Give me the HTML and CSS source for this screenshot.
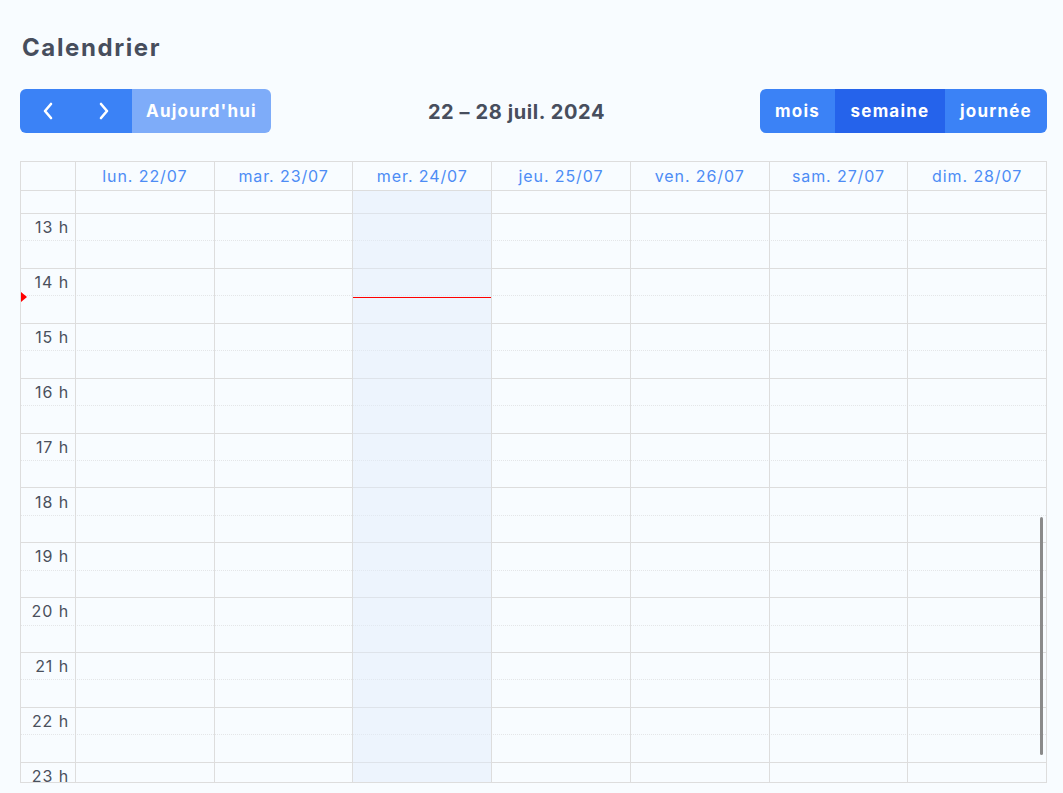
FILE: index.html
```html
<!DOCTYPE html>
<html lang="fr">
<head>
    <meta charset="UTF-8">
    <meta name="viewport" content="width=device-width, initial-scale=1.0">
    <title>Calendrier</title>
    <link rel="stylesheet" href="styles.css">
</head>
<body>
    <div class="page">
        <h1>Calendrier</h1>

        <div class="toolbar">
            <div class="btn-group">
                <button class="btn btn-icon" aria-label="précédent">
                    <svg width="12" height="18" viewBox="0 0 12 18"><polyline points="9,2 3,9 9,16" fill="none" stroke="#fff" stroke-width="2.6" stroke-linecap="round" stroke-linejoin="round"/></svg>
                </button>
                <button class="btn btn-icon" aria-label="suivant">
                    <svg width="12" height="18" viewBox="0 0 12 18"><polyline points="3,2 9,9 3,16" fill="none" stroke="#fff" stroke-width="2.6" stroke-linecap="round" stroke-linejoin="round"/></svg>
                </button>
                <button class="btn btn-disabled">Aujourd'hui</button>
            </div>

            <h2 class="toolbar-title">22 – 28 juil. 2024</h2>

            <div class="btn-group">
                <button class="btn btn-view">mois</button>
                <button class="btn btn-view active">semaine</button>
                <button class="btn btn-view">journée</button>
            </div>
        </div>

        <div class="calendar">
            <div class="col-header">
                <div class="axis-head"></div>
                <div class="day-head">lun. 22/07</div>
                <div class="day-head">mar. 23/07</div>
                <div class="day-head">mer. 24/07</div>
                <div class="day-head">jeu. 25/07</div>
                <div class="day-head">ven. 26/07</div>
                <div class="day-head">sam. 27/07</div>
                <div class="day-head">dim. 28/07</div>
            </div>

            <div class="scroller">
                <div class="slat partial"></div>
                <div class="slat hour"><span class="label">13 h</span></div>
                <div class="slat half"></div>
                <div class="slat hour"><span class="label">14 h</span></div>
                <div class="slat half"></div>
                <div class="slat hour"><span class="label">15 h</span></div>
                <div class="slat half"></div>
                <div class="slat hour"><span class="label">16 h</span></div>
                <div class="slat half"></div>
                <div class="slat hour"><span class="label">17 h</span></div>
                <div class="slat half"></div>
                <div class="slat hour"><span class="label">18 h</span></div>
                <div class="slat half"></div>
                <div class="slat hour"><span class="label">19 h</span></div>
                <div class="slat half"></div>
                <div class="slat hour"><span class="label">20 h</span></div>
                <div class="slat half"></div>
                <div class="slat hour"><span class="label">21 h</span></div>
                <div class="slat half"></div>
                <div class="slat hour"><span class="label">22 h</span></div>
                <div class="slat half"></div>
                <div class="slat hour"><span class="label">23 h</span></div>
                <div class="slat half"></div>

                <!-- columns sit over the slats, like the real calendar -->
                <div class="cols">
                    <div class="col-axis"></div>
                    <div class="col"></div>
                    <div class="col"></div>
                    <div class="col today"><div class="now-line"></div></div>
                    <div class="col"></div>
                    <div class="col"></div>
                    <div class="col"></div>
                    <div class="col"></div>
                </div>
                <div class="now-arrow"></div>
                <div class="scroll-thumb"></div>
            </div>
        </div>
    </div>
</body>
</html>
```

FILE: styles.css
```css
body {
    margin: 0;
    background: #f8fcff;
    font-family: 'Inter', 'Open Sans', sans-serif;
    color: #4a505c;
}

.page {
    padding: 0 16px 0 20px;
}

h1 {
    margin: 0;
    padding: 32px 0 0 2px;
    font-size: 24px;
    font-weight: 700;
    line-height: 32px;
    letter-spacing: 1.6px;
    color: #474e5d;
}

.toolbar {
    display: flex;
    justify-content: space-between;
    align-items: center;
    margin-top: 25px;
    margin-bottom: 28px;
}

.toolbar-title {
    margin: 0;
    font-size: 20px;
    font-weight: 700;
    letter-spacing: 0.6px;
    color: #474e5d;
    padding: 2px 0 0 2px;
}

.btn-group {
    display: flex;
    border-radius: 6px;
    overflow: hidden;
}

.btn {
    height: 44px;
    border: none;
    margin: 0;
    background: #3b82f6;
    color: #fff;
    font-family: inherit;
    font-size: 17px;
    font-weight: 700;
    letter-spacing: 1.2px;
    padding: 0;
    cursor: pointer;
}

.btn-icon {
    width: 56px;
    display: flex;
    align-items: center;
    justify-content: center;
}

.btn-disabled {
    background: #7eacf9;
    width: 139px;
    cursor: default;
}

.btn-view:nth-child(1) { width: 75px; }
.btn-view:nth-child(2) { width: 110px; }
.btn-view:nth-child(3) { width: 102px; }

.btn-view.active {
    background: #2563eb;
}

.calendar {
    border: 1px solid #dddddd;
}

.col-header {
    display: grid;
    grid-template-columns: 54px repeat(7, 1fr);
    height: 28px;
    border-bottom: 1px solid #dddddd;
}

.day-head {
    border-left: 1px solid #dddddd;
    display: flex;
    align-items: center;
    justify-content: center;
    font-size: 16px;
    letter-spacing: 0.9px;
    color: #4d8cf5;
}

.scroller {
    position: relative;
    height: 591px;
    overflow: hidden;
}

.slat {
    box-sizing: border-box;
    height: 27.45px;
    display: flex;
    align-items: center;
}

.slat.partial {
    height: 22px;
}

.slat.hour {
    border-top: 1px solid #dddddd;
}

.slat.half {
    border-top: 1px dotted #e4e6e8;
}

.label {
    width: 54px;
    text-align: right;
    padding-right: 6px;
    box-sizing: border-box;
    font-size: 16px;
    letter-spacing: 0.9px;
    color: #4a505c;
}

.cols {
    position: absolute;
    inset: 0;
    display: grid;
    grid-template-columns: 54px repeat(7, 1fr);
}

.col {
    border-left: 1px solid #dddddd;
    position: relative;
}

.col.today {
    background: rgba(225, 235, 250, 0.45);
}

.now-line {
    position: absolute;
    left: 0;
    right: 0;
    top: 106px;
    border-top: 1px solid #ff0000;
}

.now-arrow {
    position: absolute;
    left: 0;
    top: 101px;
    border-style: solid;
    border-width: 5px 0 5px 6px;
    border-color: transparent transparent transparent #ff0000;
}

.scroll-thumb {
    position: absolute;
    right: 3px;
    top: 326px;
    width: 3px;
    height: 238px;
    background: #8a8a8a;
    border-radius: 2px;
}
```
